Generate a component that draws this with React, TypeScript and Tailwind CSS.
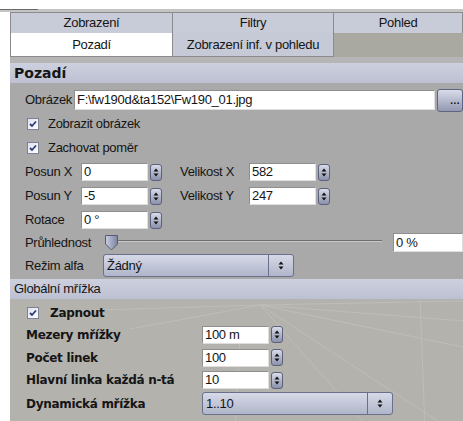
import type { ReactNode } from "react";

// Attribute-manager style panel: tabs, "Pozadí" group and "Globální mřížka" group.

const label = "font-['Liberation_Sans',Arial,sans-serif] text-[13px] tracking-[-0.3px] text-[#151515]";
const bold = "font-['DejaVu_Sans',Verdana,sans-serif] text-[12px] tracking-[-0.3px] font-bold text-[#151515]";

export default function App() {
  return (
    <div className="relative h-[421px] w-[463px] overflow-hidden bg-white">
      <div className="h-[9px]" />
      <div className="h-[3px] bg-[#c4c4c4]">
        <div className="h-[1px] w-[38px] bg-[#6a6a6a]" />
      </div>
      <div className="flex">
        <div className="w-[10px] shrink-0" />
        <div className="min-w-0 flex-1">
          <Tabs />
          <div className="h-[6px] bg-[#b5b5b5]" />
          <GroupHeader>
            <span className="font-['DejaVu_Sans',Verdana,sans-serif] text-[14px] font-bold text-[#151515]">Pozadí</span>
          </GroupHeader>
          <BackgroundGroup />
          <GroupHeader>
            <span className={label}>Globální mřížka</span>
          </GroupHeader>
          <GridGroup />
        </div>
      </div>
    </div>
  );
}

function Tabs() {
  return (
    <div className={label}>
      <div className="grid h-[21px] grid-cols-[162px_161px_1fr] border-t border-l border-[#8b8b8b] bg-[#c8cbd8]">
        <TabCell>Zobrazení</TabCell>
        <TabCell>Filtry</TabCell>
        <TabCell>Pohled</TabCell>
      </div>
      <div className="grid h-[24px] grid-cols-[162px_161px_1fr] border-l border-[#8b8b8b]">
        <TabCell className="bg-white">Pozadí</TabCell>
        <TabCell className="bg-[#c6c9d6]">Zobrazení inf. v pohledu</TabCell>
        <div className="bg-[#a9a8a1]" />
      </div>
    </div>
  );
}

function TabCell({ children, className = "" }: { children: ReactNode; className?: string }) {
  return (
    <div className={`flex items-center justify-center border-r border-b border-[#8b8b8b] whitespace-nowrap ${className}`}>
      {children}
    </div>
  );
}

function GroupHeader({ children }: { children: ReactNode }) {
  return (
    <div className="flex h-[20px] items-center bg-gradient-to-b from-[#cdd0de] to-[#bcc0d2] pl-[4px]">
      {children}
    </div>
  );
}

function BackgroundGroup() {
  return (
    <div className="bg-[#a9a9a9] pt-[5px] pb-[1px] pl-[15px]">
      <div className="flex h-[24px] items-center">
        <span className={`${label} w-[56px]`}>Obrázek</span>
        <TextBox value="F:\fw190d&ta152\Fw190_01.jpg" className="h-[20px] w-[361px]" />
        <button className="ml-[2px] h-[23px] w-[26px] shrink-0 rounded-[3px] border border-[#5f6580] bg-gradient-to-b from-[#d9dcea] to-[#9499b2] text-left pl-[12px] text-[12px] leading-none">
          ...
        </button>
      </div>
      <CheckRow text="Zobrazit obrázek" />
      <CheckRow text="Zachovat poměr" />
      <div className="flex h-[24px] items-center">
        <span className={`${label} w-[56px]`}>Posun X</span>
        <NumberBox value="0" />
        <span className={`${label} ml-[18px] w-[69px]`}>Velikost X</span>
        <NumberBox value="582" />
      </div>
      <div className="flex h-[24px] items-center">
        <span className={`${label} w-[56px]`}>Posun Y</span>
        <NumberBox value="-5" />
        <span className={`${label} ml-[18px] w-[69px]`}>Velikost Y</span>
        <NumberBox value="247" />
      </div>
      <div className="flex h-[24px] items-center">
        <span className={`${label} w-[56px]`}>Rotace</span>
        <NumberBox value="0 °" />
      </div>
      <div className="flex h-[21px] items-center">
        <span className={`${label} w-[80px]`}>Průhlednost</span>
        <Slider />
        <TextBox value="0 %" className="ml-[11px] h-[19px] w-[70px]" />
      </div>
      <div className="flex h-[25px] items-center">
        <span className={`${label} w-[78px]`}>Režim alfa</span>
        <Select value="Žádný" />
      </div>
    </div>
  );
}

function GridGroup() {
  return (
    <div className="relative h-[130px] bg-[#b3b2ad]">
      <svg className="absolute inset-0" width="453" height="130" viewBox="0 0 453 130">
        <g stroke="#bebdb7" strokeWidth="1" fill="none">
          <line x1="250" y1="6" x2="453" y2="2" />
          <line x1="250" y1="6" x2="453" y2="22" />
          <line x1="250" y1="6" x2="453" y2="48" />
          <line x1="250" y1="6" x2="440" y2="130" />
          <line x1="250" y1="6" x2="360" y2="130" />
          <line x1="250" y1="6" x2="120" y2="30" />
          <line x1="250" y1="6" x2="60" y2="12" />
          <line x1="230" y1="40" x2="225" y2="130" />
          <line x1="410" y1="0" x2="415" y2="130" />
        </g>
      </svg>
      <div className="relative pt-[3px] pl-[16px]">
        <div className="flex h-[21px] items-center pl-[1px]">
          <CheckBox />
          <span className={`${bold} ml-[11px]`}>Zapnout</span>
        </div>
        <div className="flex h-[23px] items-center">
          <span className={`${bold} w-[176px]`}>Mezery mřížky</span>
          <NumberBox value="100 m" />
        </div>
        <div className="flex h-[23px] items-center">
          <span className={`${bold} w-[176px]`}>Počet linek</span>
          <NumberBox value="100" />
        </div>
        <div className="flex h-[22px] items-center">
          <span className={`${bold} w-[176px] whitespace-nowrap`}>Hlavní linka každá n-tá</span>
          <NumberBox value="10" />
        </div>
        <div className="flex h-[25px] items-center">
          <span className={`${bold} w-[176px]`}>Dynamická mřížka</span>
          <Select value="1..10" />
        </div>
      </div>
    </div>
  );
}

function CheckRow({ text }: { text: string }) {
  return (
    <div className="flex h-[24px] items-center pl-[2px]">
      <CheckBox />
      <span className={`${label} ml-[9px]`}>{text}</span>
    </div>
  );
}

function CheckBox() {
  return (
    <span className="flex h-[12px] w-[12px] shrink-0 items-center justify-center border border-[#7c8299] bg-gradient-to-br from-[#dfe2ec] to-white">
      <svg width="8" height="8" viewBox="0 0 8 8">
        <path d="M1 4 L3 6 L7 1.5" stroke="#2d3c7e" strokeWidth="1.8" fill="none" />
      </svg>
    </span>
  );
}

function TextBox({ value, className = "" }: { value: string; className?: string }) {
  return (
    <div
      className={`flex shrink-0 items-center overflow-hidden whitespace-nowrap border border-[#8f8f8f] border-r-[#dedede] border-b-[#dedede] bg-white pl-[2px] ${label} ${className}`}
    >
      {value}
    </div>
  );
}

function NumberBox({ value }: { value: string }) {
  return (
    <div className="flex items-center">
      <TextBox value={value} className="h-[18px] w-[67px]" />
      <Spinner />
    </div>
  );
}

function Spinner() {
  return (
    <span className="ml-[2px] flex h-[17px] w-[12px] shrink-0 items-center justify-center rounded-[3px] border border-[#5c627c] bg-gradient-to-b from-[#d8dcea] to-[#8c92ac]">
      <UpDown />
    </span>
  );
}

function UpDown() {
  return (
    <svg width="6" height="9" viewBox="0 0 6 9">
      <path d="M3 0.5 L5.5 3.5 L0.5 3.5 Z" fill="#111" />
      <path d="M3 8.5 L5.5 5.5 L0.5 5.5 Z" fill="#111" />
    </svg>
  );
}

function Select({ value }: { value: string }) {
  return (
    <div className="flex h-[23px] w-[191px] shrink-0 overflow-hidden rounded-[3px] border border-[#6a708b] bg-gradient-to-b from-[#d6d9e7] to-[#b0b5ca]">
      <span className={`${label} flex flex-1 items-center pl-[3px]`}>{value}</span>
      <span className="flex w-[25px] items-center justify-center border-l border-[#6a708b]">
        <UpDown />
      </span>
    </div>
  );
}

function Slider() {
  return (
    <div className="flex flex-1 items-start">
      <svg width="13" height="16" viewBox="0 0 13 16" className="shrink-0">
        <defs>
          <linearGradient id="thumb" x1="0" y1="0" x2="1" y2="0">
            <stop offset="0" stopColor="#c9cde0" />
            <stop offset="1" stopColor="#7d83a0" />
          </linearGradient>
        </defs>
        <path d="M0.5 0.5 H12.5 V9 L6.5 15 L0.5 9 Z" fill="url(#thumb)" stroke="#555b77" />
      </svg>
      <div className="mt-[5px] h-[2px] flex-1 border-t border-[#6d6d6d] border-b border-b-[#c9c9c9]" />
    </div>
  );
}
